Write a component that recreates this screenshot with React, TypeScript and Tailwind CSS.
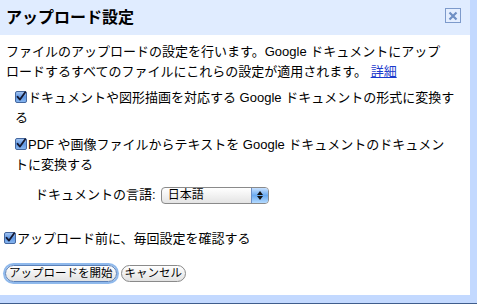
import React from "react";

const font = { fontFamily: '"Liberation Sans", "Noto Sans CJK JP", sans-serif' };

function Check() {
  return (
    <svg width="12" height="12" viewBox="0 0 12 12" className="inline-block align-[-1px] mr-[1px]">
      <defs>
        <linearGradient id="cbg" x1="0" y1="0" x2="0" y2="1">
          <stop offset="0" stopColor="#a9c8f2" />
          <stop offset="0.5" stopColor="#5f97e4" />
          <stop offset="1" stopColor="#8ab8f0" />
        </linearGradient>
      </defs>
      <rect x="0.5" y="0.5" width="11" height="11" rx="1.5" fill="url(#cbg)" stroke="#44679f" />
      <path d="M2.6 5.8 L5 8.6 L10.2 1.2" fill="none" stroke="#141830" strokeWidth="1.8" strokeLinecap="round" strokeLinejoin="round" />
    </svg>
  );
}

export default function App() {
  return (
    <div className="w-[477px] h-[304px] bg-[#c3d9ff] flex flex-col border-b border-[#3f5d8c] text-black" style={font}>
      <div className="w-[470px] h-[295px] bg-white flex flex-col shrink-0">
        <div className="h-[35px] bg-[#e0ecff] flex items-center justify-between pl-[6px] pr-[9px] shrink-0">
          <div className="text-[16px] font-bold leading-none">アップロード設定</div>
          <div className="w-[16px] h-[15px] border border-[#7d9acb] flex items-center justify-center mb-[4px] bg-[#e4eeff]">
            <svg width="10" height="10" viewBox="0 0 10 10">
              <path d="M1.5 1.5 L8.5 8.5 M8.5 1.5 L1.5 8.5" stroke="#6f8fc4" strokeWidth="2.2" />
            </svg>
          </div>
        </div>
        <div className="flex flex-col text-[13px] leading-[20px] pt-[7px]">
          <div className="pl-[6px] whitespace-nowrap">
            ファイルのアップロードの設定を行います。Google ドキュメントにアップ
            <br />
            ロードするすべてのファイルにこれらの設定が適用されます。 <a className="text-[#1a3acc] underline">詳細</a>
          </div>
          <div className="pl-[15px] mt-[6px] whitespace-nowrap">
            <Check />
            ドキュメントや図形描画を対応する Google ドキュメントの形式に変換す
            <br />る
          </div>
          <div className="pl-[15px] mt-[7px] whitespace-nowrap">
            <Check />
            PDF や画像ファイルからテキストを Google ドキュメントのドキュメン
            <br />トに変換する
          </div>
          <div className="pl-[35px] mt-[10px] flex items-center h-[20px]">
            <span>ドキュメントの言語:</span>
            <div className="ml-[5px] w-[108px] h-[17px] rounded-[4px] border border-[#8a8a8a] flex overflow-hidden bg-gradient-to-b from-[#ffffff] to-[#e4e4e4]">
              <div className="flex-1 text-[12px] leading-[15px] pl-[6px]">日本語</div>
              <div className="w-[17px] bg-gradient-to-b from-[#c6e0ff] via-[#6aaaf0] to-[#b4dbff] border-l border-[#6b8fc7] flex flex-col items-center justify-center gap-[1px]">
                <svg width="6" height="4" viewBox="0 0 6 4"><path d="M0 4 L3 0 L6 4Z" fill="#111" /></svg>
                <svg width="6" height="4" viewBox="0 0 6 4"><path d="M0 0 L3 4 L6 0Z" fill="#111" /></svg>
              </div>
            </div>
          </div>
          <div className="pl-[4px] mt-[24px] whitespace-nowrap">
            <Check />
            アップロード前に、毎回設定を確認する
          </div>
          <div className="pl-[5px] mt-[16px] flex gap-[4px]">
            <button className="h-[17px] px-[3px] rounded-full border border-[#5a80b8] bg-gradient-to-b from-white to-[#e2e2e2] text-[11.5px] leading-[15px] shadow-[0_0_0_2px_#8fb9ec]">
              アップロードを開始
            </button>
            <button className="h-[17px] px-[3px] rounded-full border border-[#8a8a8a] bg-gradient-to-b from-white to-[#e2e2e2] text-[11.5px] leading-[15px]">
              キャンセル
            </button>
          </div>
        </div>
      </div>
    </div>
  );
}
